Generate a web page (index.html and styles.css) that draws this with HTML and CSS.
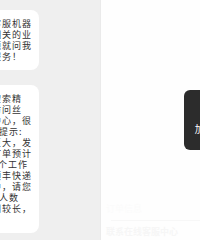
FILE: index.html
```html
<!DOCTYPE html>
<html lang="zh">
<head>
<meta charset="utf-8">
<link rel="stylesheet" href="styles.css">
</head>
<body>
<div class="screen">
  <div class="chat">
    <div class="bubble">嗨，我是智能客服机器<br>人，如有任何相关的业<br>务上的疑难问题就问我<br>我会竭诚为您服务！</div>
    <div class="bubble">您也可以直接搜索精<br>准内容，或者访问丝<br>官方客户服务中心，很<br>请耐心等待! 馨提示:<br>因近期业务量巨大，发<br>货速度较慢，订单预计<br>将在发货后的3个工作<br>日内安排通过顺丰快递<br>配送至您的手中，请您<br>请耐心等待! 询人数<br>较多，等待时间较长，<br>敬请谅解。</div>
  </div>
  <div class="panel">
    <div class="ghost-row">订单信息</div>
    <div class="ghost-line"></div>
    <div class="ghost-row strong">联系在线客服中心</div>
  </div>
  <div class="toast">
    <span class="spinner"></span>
    <span class="toast-text">加载中...</span>
  </div>
</div>
</body>
</html>
```

FILE: styles.css
```css
* { box-sizing: border-box; }
html, body {
  margin: 0;
  padding: 0;
  width: 200px;
  height: 240px;
  overflow: hidden;
  font-family: "Noto Sans CJK SC", "Noto Sans", sans-serif;
}
.screen {
  position: relative;
  display: flex;
  width: 200px;
  height: 240px;
  overflow: hidden;
  background: #ffffff;
}
.chat {
  width: 101px;
  flex: none;
  background: #efefef;
  border-right: 1px solid #eaeaea;
  padding-top: 10px;
  display: flex;
  flex-direction: column;
  align-items: flex-start;
  gap: 15px;
  overflow: hidden;
}
.bubble {
  margin-left: -76px;
  width: 115px;
  padding: 8px 7px 8px 8px;
  background: #ffffff;
  border-radius: 8px;
  font-size: 9px;
  letter-spacing: 1px;
  line-height: 11px;
  color: #333333;
  white-space: nowrap;
}
.panel {
  flex: 1;
  background: #fefefe;
  display: flex;
  flex-direction: column;
  justify-content: flex-end;
  padding: 0 0 3px 5px;
  gap: 6px;
}
.ghost-row {
  font-size: 9px;
  line-height: 10px;
  color: #fbfbfb;
  white-space: nowrap;
}
.ghost-row.strong {
  font-weight: bold;
  color: #f6f6f6;
}
.ghost-line {
  height: 1px;
  margin-left: 5px;
  background: #f7f7f7;
}
.toast {
  position: absolute;
  left: 184px;
  top: 90px;
  width: 60px;
  height: 60px;
  background: #2c2c2c;
  border-radius: 6px;
  display: flex;
  flex-direction: column;
  align-items: center;
  justify-content: flex-end;
  padding-bottom: 16px;
  gap: 6px;
}
.spinner {
  width: 16px;
  height: 16px;
  border: 2px solid rgba(255,255,255,0.3);
  border-top-color: #ffffff;
  border-radius: 50%;
}
.toast-text {
  font-size: 10px;
  line-height: 11px;
  color: #ffffff;
  white-space: nowrap;
}
```
